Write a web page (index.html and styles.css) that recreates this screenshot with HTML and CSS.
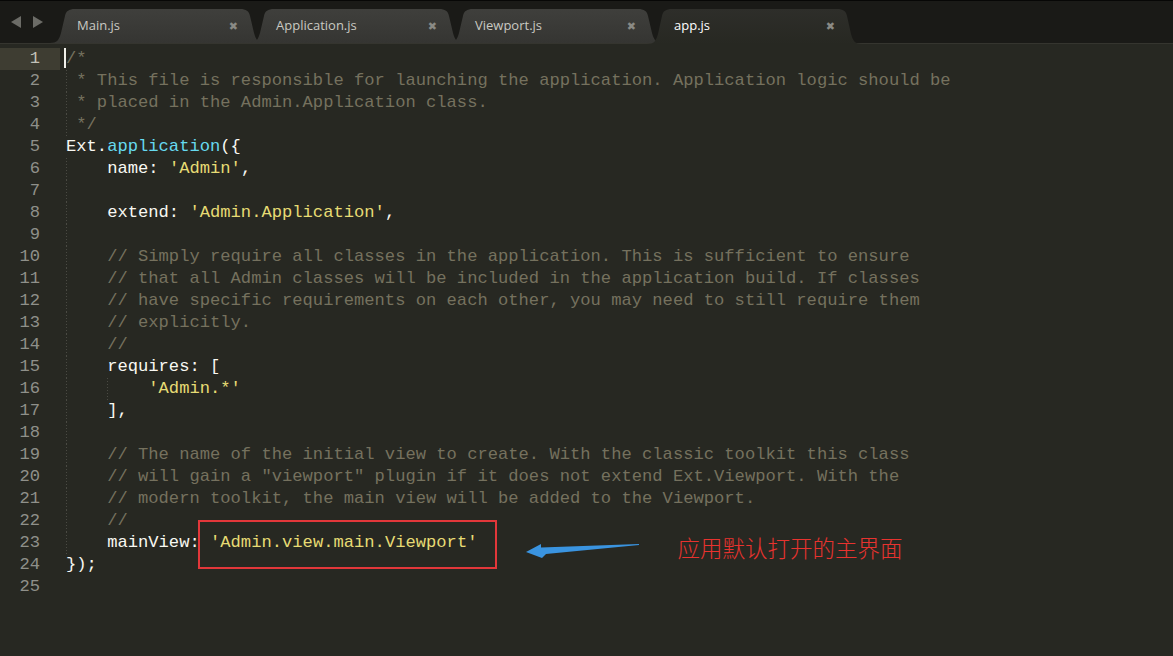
FILE: index.html
```html
<!DOCTYPE html>
<html lang="en">
<head>
    <meta charset="UTF-8">
    <title>app.js</title>
    <link rel="stylesheet" href="styles.css">
</head>
<body>

    <div class="tabbar">
        <div class="nav">
            <svg width="12" height="12" viewBox="0 0 12 12"><path d="M0 6 L10 0 L10 12 Z" fill="#6c6c67"/></svg>
            <svg width="12" height="12" viewBox="0 0 12 12"><path d="M1 0 L11 6 L1 12 Z" fill="#6c6c67"/></svg>
        </div>
        <div class="tab"><span class="tab-name">Main.js</span><span class="tab-close">✖</span></div>
        <div class="tab"><span class="tab-name">Application.js</span><span class="tab-close">✖</span></div>
        <div class="tab"><span class="tab-name">Viewport.js</span><span class="tab-close">✖</span></div>
        <div class="tab active"><span class="tab-name">app.js</span><span class="tab-close">✖</span></div>
    </div>

    <div class="editor">
        <div class="line current"><span class="ln">1</span><span class="code"><span class="cursor"></span><span class="c">/*</span></span></div>
        <div class="line"><span class="ln">2</span><span class="code guide"><span class="c"> * This file is responsible for launching the application. Application logic should be</span></span></div>
        <div class="line"><span class="ln">3</span><span class="code guide"><span class="c"> * placed in the Admin.Application class.</span></span></div>
        <div class="line"><span class="ln">4</span><span class="code guide"><span class="c"> */</span></span></div>
        <div class="line"><span class="ln">5</span><span class="code">Ext.<span class="f">application</span>({</span></div>
        <div class="line"><span class="ln">6</span><span class="code guide">    name: <span class="s">'Admin'</span>,</span></div>
        <div class="line"><span class="ln">7</span><span class="code guide"></span></div>
        <div class="line"><span class="ln">8</span><span class="code guide">    extend: <span class="s">'Admin.Application'</span>,</span></div>
        <div class="line"><span class="ln">9</span><span class="code guide"></span></div>
        <div class="line"><span class="ln">10</span><span class="code guide"><span class="c">    // Simply require all classes in the application. This is sufficient to ensure</span></span></div>
        <div class="line"><span class="ln">11</span><span class="code guide"><span class="c">    // that all Admin classes will be included in the application build. If classes</span></span></div>
        <div class="line"><span class="ln">12</span><span class="code guide"><span class="c">    // have specific requirements on each other, you may need to still require them</span></span></div>
        <div class="line"><span class="ln">13</span><span class="code guide"><span class="c">    // explicitly.</span></span></div>
        <div class="line"><span class="ln">14</span><span class="code guide"><span class="c">    //</span></span></div>
        <div class="line"><span class="ln">15</span><span class="code guide">    requires: [</span></div>
        <div class="line"><span class="ln">16</span><span class="code guide guide2">        <span class="s">'Admin.*'</span></span></div>
        <div class="line"><span class="ln">17</span><span class="code guide">    ],</span></div>
        <div class="line"><span class="ln">18</span><span class="code guide"></span></div>
        <div class="line"><span class="ln">19</span><span class="code guide"><span class="c">    // The name of the initial view to create. With the classic toolkit this class</span></span></div>
        <div class="line"><span class="ln">20</span><span class="code guide"><span class="c">    // will gain a "viewport" plugin if it does not extend Ext.Viewport. With the</span></span></div>
        <div class="line"><span class="ln">21</span><span class="code guide"><span class="c">    // modern toolkit, the main view will be added to the Viewport.</span></span></div>
        <div class="line"><span class="ln">22</span><span class="code guide"><span class="c">    //</span></span></div>
        <div class="line"><span class="ln">23</span><span class="code guide">    mainView: <span class="s mark">'Admin.view.main.Viewport'</span><svg class="arrow" width="116" height="18" viewBox="0 0 116 18"><path d="M1 10 L16 2 L16 5.5 L114 2 L114 3 L21 12 L17 16 Z" fill="#3a94e0"/></svg><span class="note">应用默认打开的主界面</span></span></div>
        <div class="line"><span class="ln">24</span><span class="code">});</span></div>
        <div class="line"><span class="ln">25</span><span class="code"></span></div>
    </div>

</body>
</html>
```

FILE: styles.css
```css
/* Editor window, dark theme */
html, body {
    margin: 0;
    padding: 0;
    height: 100%;
    background: #272822;
    overflow: hidden;
}

/* Tab strip */
.tabbar {
    display: flex;
    align-items: flex-end;
    height: 44px;
    box-sizing: border-box;
    background: #1a1a17;
    border-top: 1px solid #070706;
    border-bottom: 1px solid #35352f;
}

.nav {
    width: 50px;
    align-self: stretch;
    display: flex;
    align-items: center;
    gap: 9px;
    padding-left: 11px;
    box-sizing: border-box;
}

.tab {
    flex: none;
    width: 215px;
    height: 34px;
    margin-right: -16px;
    padding: 0 27px 0 27px;
    box-sizing: border-box;
    display: flex;
    align-items: center;
    justify-content: space-between;
    background: linear-gradient(#3f3f3c, #353532);
    clip-path: path('M0 34 C7 34 9 31 11 24 L15 7 C16 2 19 0 25 0 L190 0 C196 0 199 2 200 7 L204 24 C206 31 208 34 215 34 Z');
    font-family: "Open Sans", sans-serif;
    font-size: 13px;
    color: #c9c9c2;
}

.tab.active {
    height: 35px;
    margin-bottom: -1px;
    background: linear-gradient(#2e2e2a, #272822);
    clip-path: path('M0 35 C7 35 9 32 11 25 L15 7 C16 2 19 0 25 0 L190 0 C196 0 199 2 200 7 L204 25 C206 32 208 35 215 35 Z');
    color: #ffffff;
    padding-bottom: 1px;
}

.tab-name {
    padding-bottom: 2px;
}

.tab-close {
    font-family: "DejaVu Sans", sans-serif;
    font-size: 11px;
    color: #8a8a84;
}

/* Code area */
.editor {
    padding-top: 4px;
    font-family: "Liberation Mono", monospace;
    font-size: 17.15px;
    color: #f8f8f2;
}

.line {
    display: flex;
    height: 22px;
    line-height: 22px;
}

.ln {
    flex: none;
    width: 60px;
    padding-right: 20px;
    box-sizing: border-box;
    text-align: right;
    color: #8f908a;
}

.current .ln {
    background: #3e3d32;
    color: #c2c2b8;
}

.code {
    flex: 1;
    margin-left: 6px;
    white-space: pre;
}

.guide {
    background: repeating-linear-gradient(to bottom, #4a4a43 0 1px, transparent 1px 3px) no-repeat 0 0 / 1px 100%;
}

.guide2 {
    background:
        repeating-linear-gradient(to bottom, #4a4a43 0 1px, transparent 1px 3px) no-repeat 0 0 / 1px 100%,
        repeating-linear-gradient(to bottom, #4a4a43 0 1px, transparent 1px 3px) no-repeat 41px 0 / 1px 100%;
}

.cursor {
    display: inline-block;
    width: 2px;
    height: 20px;
    margin-left: -2px;
    vertical-align: -5px;
    background: #f0f0ea;
}

.c { color: #75715e; }
.s { color: #e6db74; }
.f { color: #66d9ef; }

/* Annotation */
.mark {
    position: relative;
}

.mark::after {
    content: "";
    position: absolute;
    left: -12px;
    right: -20px;
    top: -13px;
    bottom: -17px;
    border: 2px solid #e2373a;
}

.arrow {
    margin-left: 48px;
    vertical-align: -13px;
}

.note {
    margin-left: 36px;
    font-family: "Noto Sans CJK SC", sans-serif;
    font-size: 22.5px;
    font-weight: 300;
    color: #e8332f;
    vertical-align: -10px;
}
```
